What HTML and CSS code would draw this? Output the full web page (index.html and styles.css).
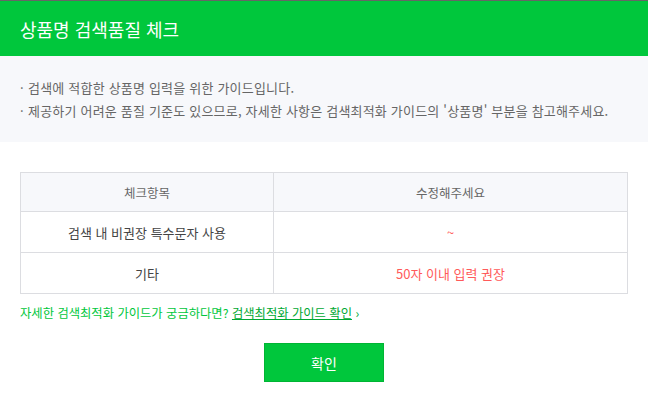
FILE: index.html
```html
<!DOCTYPE html>
<html lang="ko">
<head>
<meta charset="utf-8">
<link rel="stylesheet" href="styles.css">
</head>
<body>
<div class="modal">
  <div class="header">상품명 검색품질 체크</div>
  <div class="guide">
    <p class="guide-line"><span class="dot">·</span>검색에 적합한 상품명 입력을 위한 가이드입니다.</p>
    <p class="guide-line"><span class="dot">·</span>제공하기 어려운 품질 기준도 있으므로, 자세한 사항은 검색최적화 가이드의 '상품명' 부분을 참고해주세요.</p>
  </div>
  <div class="content">
    <table class="check-table">
      <thead>
        <tr><th class="col-item">체크항목</th><th>수정해주세요</th></tr>
      </thead>
      <tbody>
        <tr><td>검색 내 비권장 특수문자 사용</td><td class="warn">~</td></tr>
        <tr><td>기타</td><td class="warn">50자 이내 입력 권장</td></tr>
      </tbody>
    </table>
    <p class="more">자세한 검색최적화 가이드가 궁금하다면? <a class="more-link" href="#">검색최적화 가이드 확인</a> <span class="chev">›</span></p>
    <div class="actions"><button class="btn-ok" type="button">확인</button></div>
  </div>
</div>
</body>
</html>
```
FILE: styles.css
```css
* { box-sizing: border-box; }
html, body { margin: 0; padding: 0; background: #fff; }
body {
  font-family: "Noto Sans CJK KR", "Noto Sans", sans-serif;
  color: #333;
}
.modal {
  width: 648px;
  border-top: 1px solid #666;
}
.header {
  height: 55px;
  background: #00c73c;
  color: #fff;
  font-size: 18px;
  display: flex;
  align-items: center;
  padding-left: 20px;
}
.guide {
  background: #f7f8fb;
  padding: 20px 20px;
}
.guide-line {
  margin: 0;
  font-size: 13px;
  line-height: 23px;
  letter-spacing: 0.2px;
  color: #666;
  display: flex;
}
.dot { width: 8px; flex: none; }
.content { padding: 30px 20px 0; }
.check-table {
  width: 100%;
  border-collapse: collapse;
  table-layout: fixed;
  font-size: 13px;
}
.check-table th, .check-table td {
  border: 1px solid #dcdde1;
  text-align: center;
  font-weight: normal;
}
.check-table th {
  background: #f7f8fb;
  color: #666;
  height: 39px;
  font-size: 12.5px;
}
.check-table td {
  height: 41px;
  color: #444;
}
.col-item { width: 253px; }
.check-table td.warn { color: #ff5a5a; }
.more {
  margin: 9px 0 0;
  font-size: 12.3px;
  line-height: 20px;
  color: #00c73c;
}
.more-link { color: #00a832; text-decoration: underline; }
.chev { color: #00a832; }
.actions {
  display: flex;
  justify-content: center;
  margin-top: 20px;
}
.btn-ok {
  width: 120px;
  height: 39px;
  background: #00c73c;
  border: 1px solid #00b534;
  color: #fff;
  font-family: inherit;
  font-size: 14px;
  padding: 0;
}
```
